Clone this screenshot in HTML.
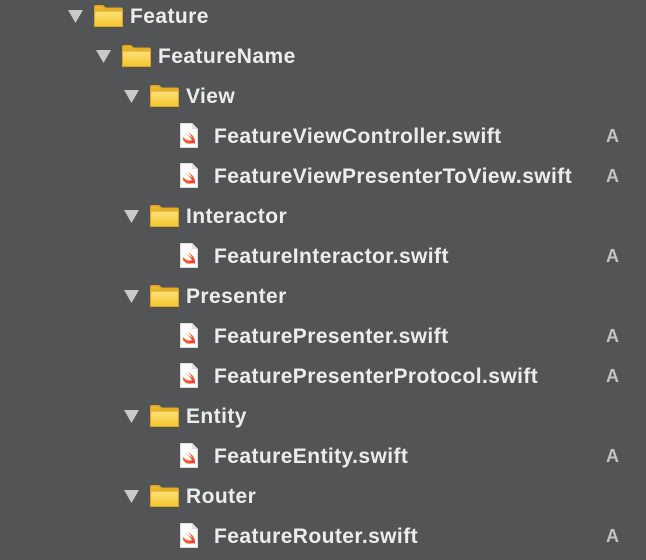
<!DOCTYPE html><html><head><style>
body{margin:0;width:646px;height:560px;background:#535456;overflow:hidden;font-family:"Liberation Sans",sans-serif;}
.r{position:absolute;height:40px;left:0;width:646px;}
.t{position:absolute;top:0;line-height:33px;font-size:21px;font-weight:bold;letter-spacing:0.42px;color:#ececec;}
.a{position:absolute;left:606px;top:0;line-height:33px;font-size:18px;font-weight:bold;color:#c4c4c4;}
svg{position:absolute;}
</style></head><body>
<svg width="0" height="0"><defs>
<linearGradient id="g" x1="0" y1="0" x2="0" y2="1"><stop offset="0" stop-color="#fde27a"/><stop offset="1" stop-color="#f5c52f"/></linearGradient>
<linearGradient id="s" x1="0" y1="0" x2="1" y2="1"><stop offset="0" stop-color="#f88a3a"/><stop offset="1" stop-color="#f0332d"/></linearGradient>
</defs></svg>
<div id="c"></div>
<script>
var rows=[[0,'d','Feature'],[1,'d','FeatureName'],[2,'d','View'],[3,'f','FeatureViewController.swift'],[3,'f','FeatureViewPresenterToView.swift'],[2,'d','Interactor'],[3,'f','FeatureInteractor.swift'],[2,'d','Presenter'],[3,'f','FeaturePresenter.swift'],[3,'f','FeaturePresenterProtocol.swift'],[2,'d','Entity'],[3,'f','FeatureEntity.swift'],[2,'d','Router'],[3,'f','FeatureRouter.swift']];
var h='';
rows.forEach(function(r,i){var y=i*40;var L=r[0];
h+='<div class="r" style="top:'+y+'px">';
if(r[1]=='d'){var x=68+L*28;
h+='<svg style="left:'+x+'px;top:10px" width="15" height="13"><polygon points="0,0 15,0 7.5,13" fill="#c9c9c9"/></svg>';
h+='<svg style="left:'+(x+25)+'px;top:4px" width="31" height="24"><path d="M1.5 5 V3 Q1.5 1.5 3 1.5 H10 L12.5 4 H28 Q29.5 4 29.5 5.5 V22.5 H1.5 Z" fill="#eab52a" stroke="#d9a21d"/><rect x="1.5" y="7" width="28" height="15.5" fill="url(#g)" stroke="#dba824"/></svg>';
h+='<div class="t" style="left:'+(x+62)+'px">'+r[2]+'</div>';}
else{
h+='<svg style="left:180px;top:3px" width="18" height="25"><path d="M0.5 0.5 H12 L17.5 6 V24.5 H0.5 Z" fill="#fafafa" stroke="#ddd"/><path d="M12 0.5 V6 H17.5" fill="#ddd"/><path d="M3 14 Q8 19 12 17 Q9 13 5 10 Q9 13 12 14.5 Q10 11 8 9 Q13 12 14.5 16 Q15.5 19 14.5 21 Q13 19.5 11 20.5 Q6 21.5 3 17 Z" fill="url(#s)"/></svg>';
h+='<div class="t" style="left:214px">'+r[2]+'</div><div class="a">A</div>';}
h+='</div>';});
document.getElementById('c').innerHTML=h;
</script>
</body></html>
